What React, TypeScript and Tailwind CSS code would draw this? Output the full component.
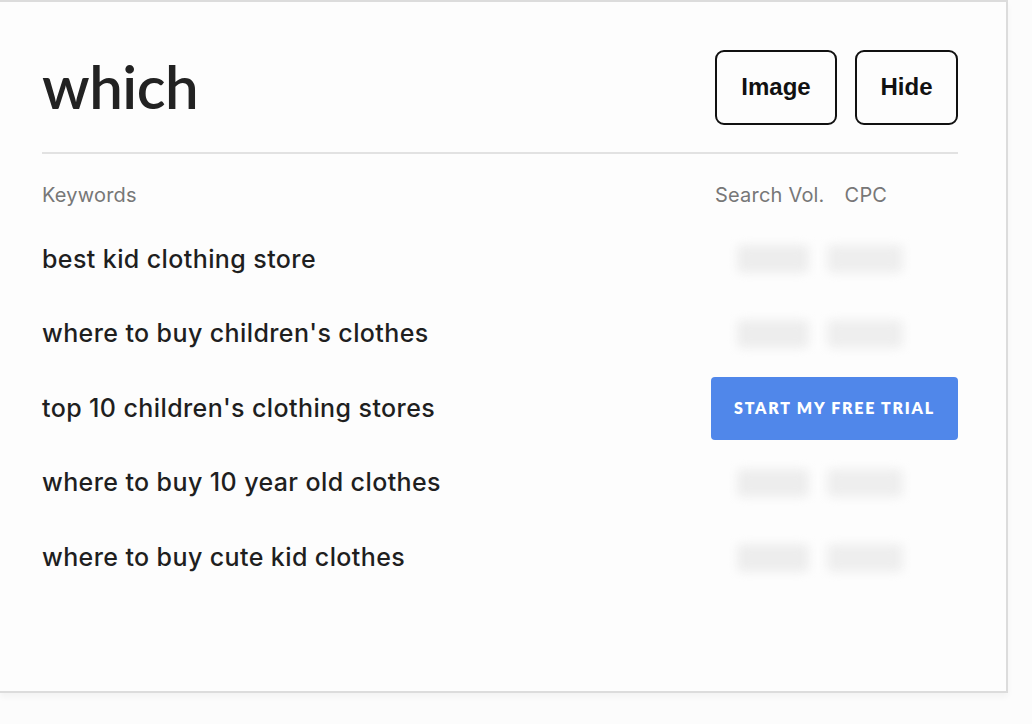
import React from "react";

const rows = [
  "best kid clothing store",
  "where to buy children's clothes",
  "top 10 children's clothing stores",
  "where to buy 10 year old clothes",
  "where to buy cute kid clothes",
];

function Blur() {
  return (
    <div className="flex items-center">
      <div className="ml-[26px] h-[28px] w-[72px] rounded-md bg-[#ededed] blur-[5px]" />
      <div className="ml-[18px] h-[28px] w-[76px] rounded-md bg-[#eeeeee] blur-[5px]" />
    </div>
  );
}

export default function App() {
  return (
    <div className="h-[724px] w-[1032px] bg-[#fcfcfc] overflow-hidden">
      <div className="h-[693px] w-[1008px] bg-[#fdfdfd] border-t-2 border-r-2 border-b-2 border-[#dcdcdc] shadow-[0_4px_6px_rgba(0,0,0,0.04)] pl-[42px] pr-[48px] pt-[47px]">
        <div className="flex items-center justify-between h-[76px]">
          <h1
            className="text-[60px] leading-none font-semibold text-[#222] tracking-[-0.5px] -mt-[2px]"
            style={{ fontFamily: "Lato, sans-serif" }}
          >
            which
          </h1>
          <div className="flex gap-[18px]" style={{ fontFamily: "'Liberation Sans', Arial, sans-serif" }}>
            <button className="h-[75px] w-[122px] rounded-[9px] border-2 border-[#111] text-[24px] font-bold text-[#111]">
              Image
            </button>
            <button className="h-[75px] w-[103px] rounded-[9px] border-2 border-[#111] text-[24px] font-bold text-[#111]">
              Hide
            </button>
          </div>
        </div>
        <div className="mt-[27px] h-[2px] bg-[#e2e2e2]" />
        <div style={{ fontFamily: "Inter, sans-serif" }}>
          <div className="mt-[22px] flex h-[38px] items-center justify-between text-[20px] tracking-[0.2px] text-[#777]">
            <span>Keywords</span>
            <div className="flex w-[247px] items-center">
              <span className="ml-[4px]">Search Vol.</span>
              <span className="ml-[20px]">CPC</span>
            </div>
          </div>
          <div className="mt-[8px]">
            {rows.map((r, i) => (
              <div key={r} className="flex h-[74.6px] items-center justify-between">
                <span className="text-[25px] font-medium text-[#1f1f1f] tracking-[0.4px]">{r}</span>
                <div className="w-[247px]">
                  {i === 2 ? (
                    <button
                      className="h-[63px] w-[247px] rounded-[4px] bg-[#5087ea] text-[16px] font-extrabold tracking-[0.11em] text-white"
                      style={{ fontFamily: "Lato, sans-serif" }}
                    >
                      START MY FREE TRIAL
                    </button>
                  ) : (
                    <Blur />
                  )}
                </div>
              </div>
            ))}
          </div>
        </div>
      </div>
    </div>
  );
}
